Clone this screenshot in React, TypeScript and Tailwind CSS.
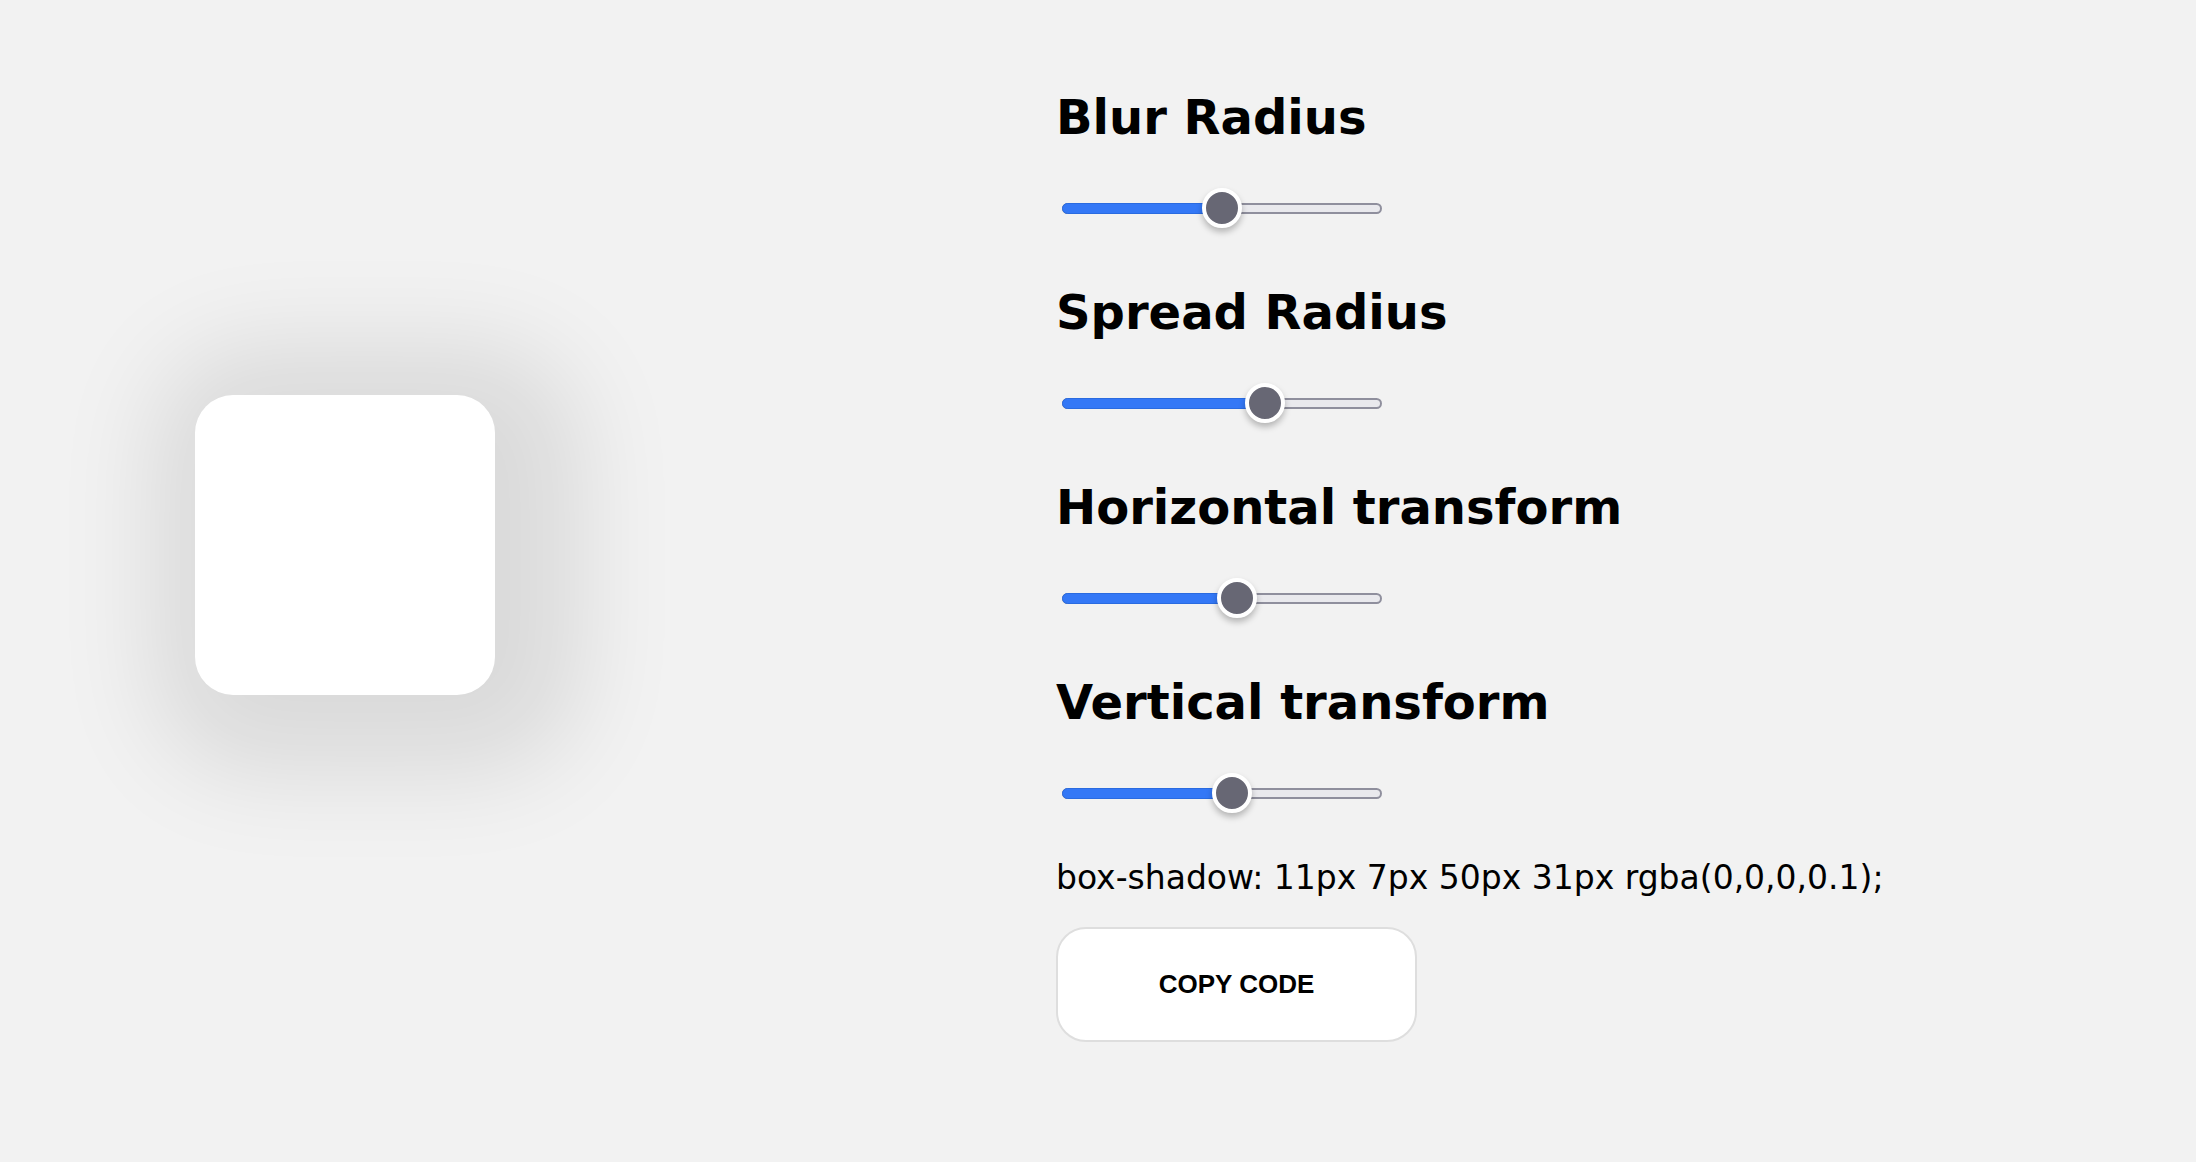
import { useState } from "react";

interface SliderProps {
  value: number;
  min: number;
  max: number;
}

function ShadowSlider({ value, min, max }: SliderProps) {
  const frac = (value - min) / (max - min);
  const thumbLeft = frac * (320 - 40);

  return (
    <div className="relative ml-[6px] flex h-[40px] w-[320px] items-center">
      <div className="relative h-[11px] w-full">
        <div className="absolute inset-0 rounded-full border-2 border-[#8f8f9d] bg-[#e9e9ed]" />
        <div
          className="absolute top-0 left-0 h-full rounded-full border border-[#2a6be0] bg-[#3478f6]"
          style={{ width: thumbLeft + 20 }}
        />
      </div>
      <div
        className="absolute top-0 size-[40px] rounded-full border-4 border-white bg-[#676774] shadow-[0_4px_6px_rgba(0,0,0,0.25)]"
        style={{ left: thumbLeft }}
      />
    </div>
  );
}

export default function App() {
  const [controls] = useState([
    { label: "Blur Radius", value: 50, min: 0, max: 100 },
    { label: "Spread Radius", value: 31, min: -100, max: 100 },
    { label: "Horizontal transform", value: 11, min: -100, max: 100 },
    { label: "Vertical transform", value: 7, min: -100, max: 100 },
  ]);

  const [blur, spread, h, v] = controls.map((c) => c.value);
  const code = `box-shadow: ${h}px ${v}px ${blur}px ${spread}px rgba(0,0,0,0.1);`;

  return (
    <div className="flex min-h-screen bg-[#f2f2f2] text-black">
      <div className="w-[1056px] shrink-0 pt-[395px] pl-[195px]">
        <div className="size-[300px] rounded-[38px] bg-white shadow-[22px_14px_100px_62px_rgba(0,0,0,0.1)]" />
      </div>

      <div className="pt-[89px]">
        {controls.map((c) => (
          <div key={c.label} className="h-[195px]">
            <h2 className="font-['DejaVu_Sans',sans-serif] text-[48px] leading-[56px] font-bold">
              {c.label}
            </h2>
            <div className="mt-[43px]">
              <ShadowSlider value={c.value} min={c.min} max={c.max} />
            </div>
          </div>
        ))}

        <p className="-mt-[10px] font-['DejaVu_Sans',sans-serif] text-[33px] leading-[38px]">
          {code}
        </p>

        <button
          type="button"
          className="mt-[30px] flex h-[115px] w-[361px] items-center justify-center rounded-[30px] border-2 border-[#dedede] bg-white font-['Liberation_Sans',sans-serif] text-[26px] font-bold"
        >
          COPY CODE
        </button>
      </div>
    </div>
  );
}
